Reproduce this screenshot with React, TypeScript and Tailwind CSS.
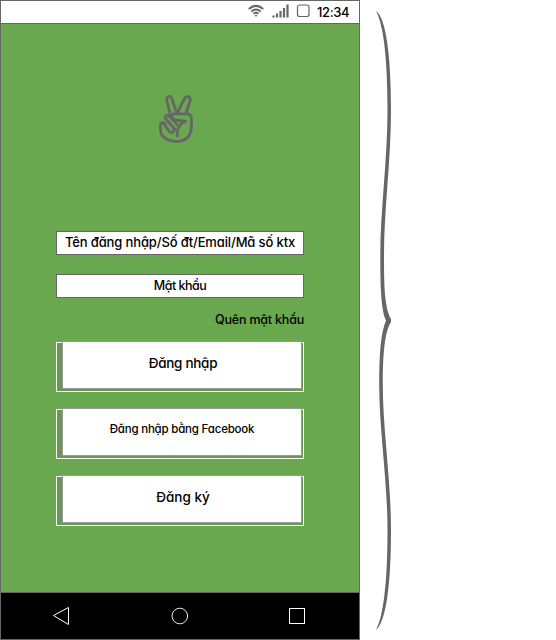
const FONT = "font-['Inter','Liberation_Sans',sans-serif] font-medium text-black whitespace-nowrap";
const ALT = '[font-feature-settings:"cv11","ss03"]';

function Field({ label, className }: { label: string; className: string }) {
  return (
    <div className="flex h-6 items-center justify-center border border-[#666] bg-white">
      <span className={className}>{label}</span>
    </div>
  );
}

function Button({ label, className }: { label: string; className: string }) {
  return (
    <button className="flex h-[50px] w-full border border-white bg-[#6a9657] pl-[5px]">
      <span className="-mt-0.5 flex h-12 w-60 items-center justify-center border border-[#999] bg-white">
        <span className={className}>{label}</span>
      </span>
    </button>
  );
}

function StatusBar() {
  return (
    <header className="flex h-[23px] shrink-0 items-center border-b border-[#666] bg-white pl-[247px]">
      <svg className="h-6 w-[63px] shrink-0" viewBox="0 0 63 24" fill="none" stroke="#666">
        <path d="M.800 9Q8 2.800 15.200 9" strokeWidth="2" />
        <path d="M3.300 11.500Q8 7.500 12.700 11.500" strokeWidth="2" />
        <path d="M5.500 13.800Q8 11.800 10.500 13.800" strokeWidth="1.8" />
        <path d="M6.500 15H9.500L8 17Z" fill="#666" stroke="none" />
        <path d="M25.500 17.500V15.500M29 17.500V13.500M32.500 17.500V11M36 17.500V8M39.500 17.500V4.500" strokeWidth="2.2" />
        <rect x="49.500" y="5" width="11.500" height="11.500" rx="2" strokeWidth="1.2" />
      </svg>
      <span className={`${FONT} ml-[6px] mt-px text-[13px] tracking-[-0.35px]`}>12:34</span>
    </header>
  );
}

function PeaceIcon() {
  return (
    <svg
      className="mt-[70px] h-[50px] w-[44px] -translate-x-1"
      viewBox="154 94 44 50"
      fill="none"
      stroke="#666"
      strokeWidth="2.8"
      strokeLinecap="round"
      strokeLinejoin="round"
    >
      <path d="M170.500 115.500L166.800 100.500C165.800 96 170.600 95 171.800 98.500L176.500 112.500" />
      <path d="M177.500 112.500L184.500 98.500C186.500 94.700 191.300 96.500 190 100.800L186 113.500" />
      <path d="M174 113.800H186C190 113.500 191.500 116 191.500 119.500V125C191.500 136 186 141.300 176.500 141.300C167.500 141.300 160.500 137 160.500 129.500V125.500C160.500 122.500 163.500 121.500 165.500 124" />
      <path d="M174 113.800C170.500 114.500 171.500 118.800 175 119.800L185.500 121.500C182 122 176.500 127 177.300 136" />
      <path d="M175 129.500L166 119C163.500 116.500 167 113.800 169.500 116.300L177 124.500" />
      <path d="M163.500 123.500L169.500 131.500C171.500 134 175 131.500 173.500 128.500" />
    </svg>
  );
}

export default function App() {
  return (
    <div className="flex h-[640px] w-[556px] overflow-hidden bg-white">
      <main className="flex h-[640px] w-[360px] flex-col border border-[#666] bg-[#6aa84f]">
        <StatusBar />
        <section className="flex grow flex-col items-center">
          <PeaceIcon />
          <div className="mt-[87px] flex w-[248px] flex-col">
            <Field label="Tên đăng nhập/Số đt/Email/Mã số ktx" className={`${FONT} ${ALT} text-[13px] tracking-[-0.13px]`} />
            <div className="mt-[19px]">
              <Field label="Mật khẩu" className={`${FONT} ${ALT} text-[12.5px] tracking-[-0.5px]`} />
            </div>
            <a className={`${FONT} ${ALT} mt-3 self-end text-[12.5px] leading-5 tracking-[-0.2px]`}>Quên mật khẩu</a>
            <div className="mt-3 flex flex-col gap-[17px]">
              <Button label="Đăng nhập" className={`${FONT} ${ALT} pb-1 pl-0.5 text-[13.5px] tracking-[-0.3px]`} />
              <Button label="Đăng nhập bằng Facebook" className={`${FONT} ${ALT} pb-1 text-[11.5px] tracking-[-0.2px]`} />
              <Button label="Đăng ký" className={`${FONT} ${ALT} pb-1 pl-0.5 text-[13.5px]`} />
            </div>
          </div>
        </section>
        <nav className="h-[47px] shrink-0 border-t border-[#666] bg-black">
          <svg className="h-[46px] w-[358px]" viewBox="1 593 358 46" fill="none" stroke="white">
            <path d="M53.500 615.500L68.500 607.500V624.500Z" />
            <circle cx="179.800" cy="616" r="7.800" strokeWidth="0.9" />
            <rect x="289.500" y="608.500" width="15" height="15" />
          </svg>
        </nav>
      </main>
      <svg className="h-[640px] w-[196px]" viewBox="360 0 196 640" fill="#666">
        <path d="M376 11C386 18 391 55 391 110C391 160 384 210 384 255C384 285 384.500 308 391 319V322C384.500 332 382.800 355 382.800 385C382.800 430 391 480 391 530C391 585 386 622 376 630C383 617 387.500 585 387.500 530C387.500 480 379.200 430 379.200 385C379.200 355 380.500 333 386 320.500C381 310 380.300 285 380.300 255C380.300 210 387.500 160 387.500 110C387.500 55 383 24 376 11Z" />
      </svg>
    </div>
  );
}
